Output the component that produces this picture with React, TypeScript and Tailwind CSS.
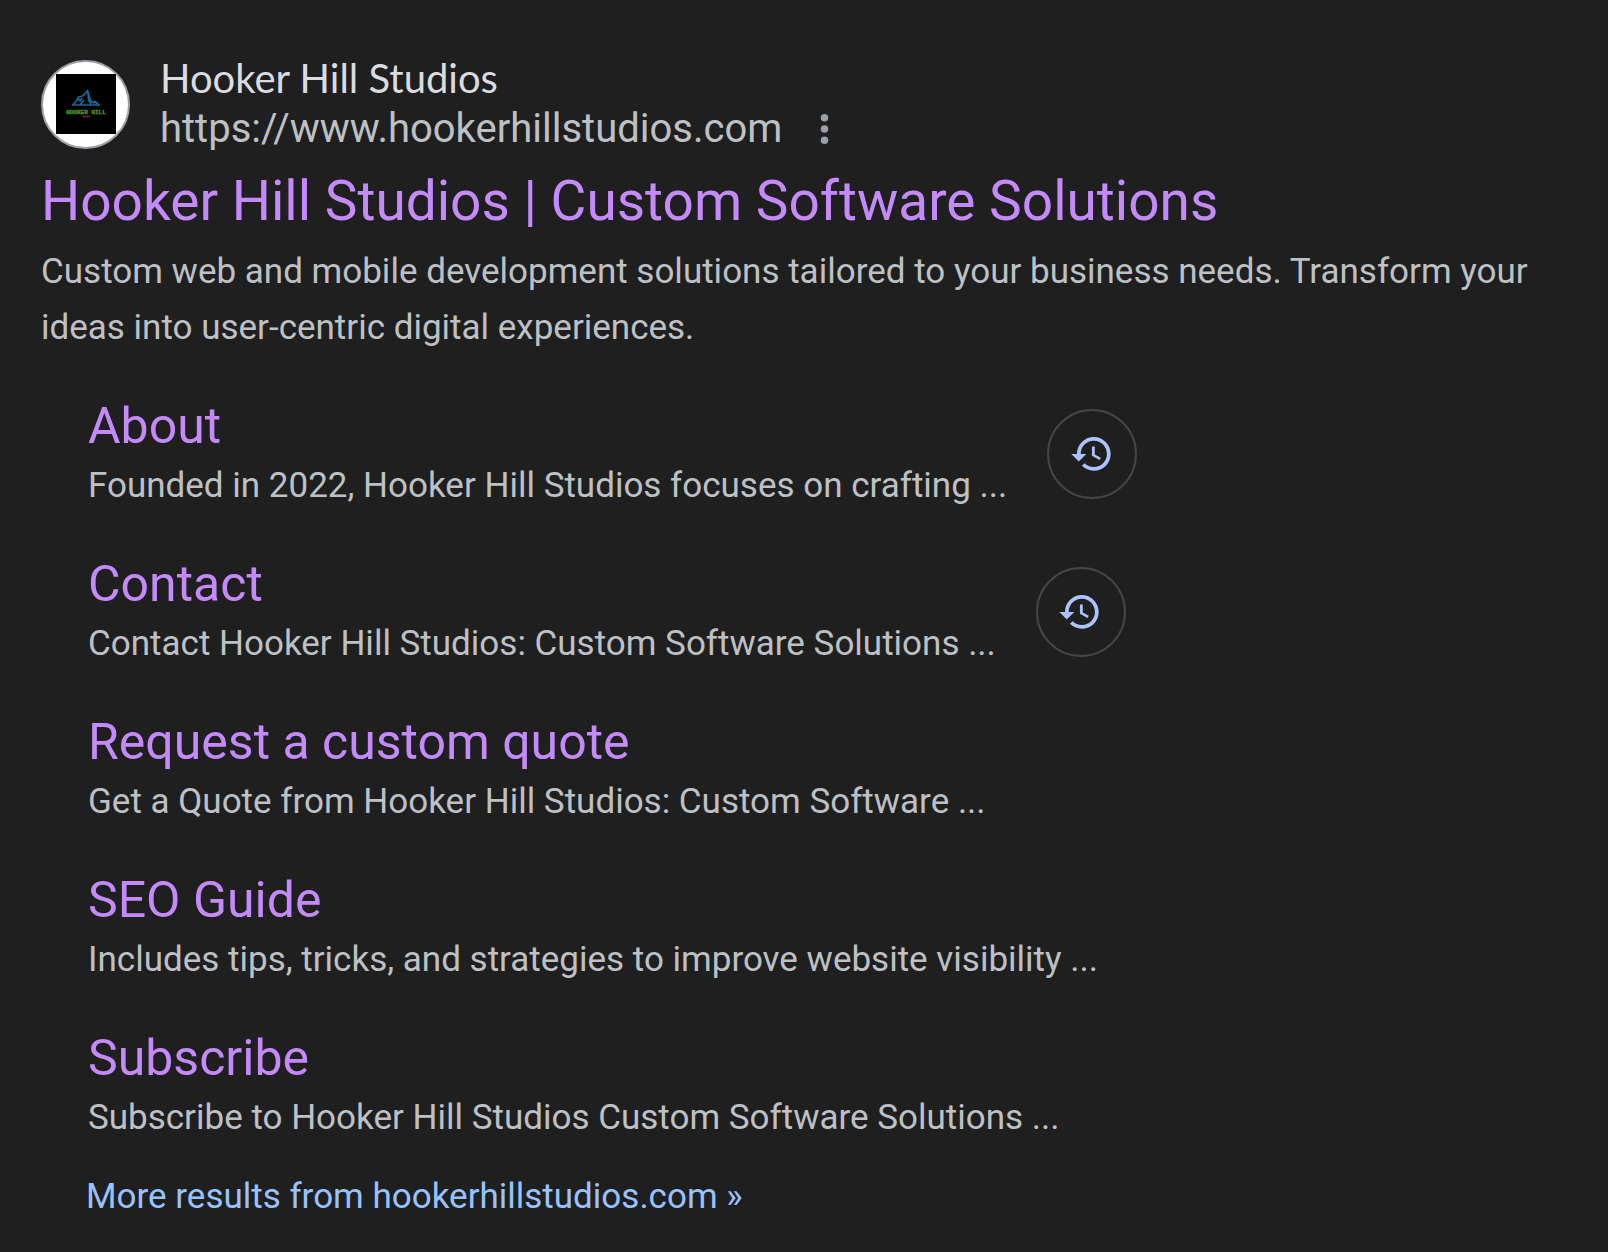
const sitelinks = [
  { title: 'About', text: 'Founded in 2022, Hooker Hill Studios focuses on crafting ...', visited: true },
  { title: 'Contact', text: 'Contact Hooker Hill Studios: Custom Software Solutions ...', visited: true },
  { title: 'Request a custom quote', text: 'Get a Quote from Hooker Hill Studios: Custom Software ...', visited: false },
  { title: 'SEO Guide', text: 'Includes tips, tricks, and strategies to improve website visibility ...', visited: false },
  { title: 'Subscribe', text: 'Subscribe to Hooker Hill Studios Custom Software Solutions ...', visited: false },
]

function Favicon() {
  return (
    <div className="flex size-[89px] shrink-0 items-center justify-center rounded-full border-2 border-[#9aa0a6] bg-white">
      <svg viewBox="0 0 60 60" className="size-[60px]" aria-hidden="true">
        <rect width="60" height="60" fill="#000" />
        {/* Mountains */}
        <g fill="none" stroke="#1a679c" strokeWidth="1.7" strokeLinejoin="round">
          <path d="M16.5 31l4-4 2-4 4-1 2.500-2 2.500-3.500 1.500 5 1.500 5 2 2 2.500-1 4 3.500" />
          <path d="M16 31h28M22 24l2 3 2-3M32 18l.5 8 2.500 4M24 31l4-5M37 29l3-1" />
        </g>
        {/* Wordmark */}
        <text
          x="30"
          y="40"
          textAnchor="middle"
          fill="#4d8c2c"
          stroke="#4d8c2c"
          strokeWidth="0.4"
          className="font-['Liberation_Mono',monospace] text-[6px] font-bold"
        >
          HOOKER HILL
        </text>
        <path d="M26.500 42.500h7.500" stroke="#8c2424" strokeWidth="2" strokeDasharray="1.500 .5" />
      </svg>
    </div>
  )
}

function HistoryIcon() {
  return (
    <svg viewBox="0 0 24 24" fill="currentColor" className="size-[45px]" aria-hidden="true">
      <path d="M12.700 2.700c-4.970 0-9 4.030-9 9H.7l3.890 3.890.07.14L8.700 11.700h-3c0-3.870 3.130-7 7-7s7 3.130 7 7-3.130 7-7 7c-1.930 0-3.680-.79-4.940-2.060l-1.420 1.420C7.970 19.690 10.210 20.700 12.700 20.700c4.970 0 9-4.030 9-9s-4.030-9-9-9zm-1 5v5l4 2.200.72-1.210-3.220-1.740V7.700h-1.500z" />
    </svg>
  )
}

export default function App() {
  return (
    <main className="min-h-screen bg-[#1f1f1f] px-[41px] pt-[53px] pb-6 font-[Roboto,sans-serif] text-[#bdc1c6]">
      {/* Site identity */}
      <header className="flex items-center gap-[30px]">
        <Favicon />
        <div>
          <div className="font-[Lato,sans-serif] text-[40px] leading-[50px] text-[#dadce0]">Hooker Hill Studios</div>
          <div className="flex items-center gap-5">
            <cite className="text-[40px] leading-[52px] not-italic">https://www.hookerhillstudios.com</cite>
            <button type="button" aria-label="About this result" className="text-[#9aa0a6]">
              <svg viewBox="0 0 24 24" fill="currentColor" className="size-[45px]" aria-hidden="true">
                <circle cx="12" cy="5.700" r="2" />
                <circle cx="12" cy="11.700" r="2" />
                <circle cx="12" cy="17.700" r="2" />
              </svg>
            </button>
          </div>
        </div>
      </header>

      <h1 className="mt-[10px] mb-[7px] text-[55px] leading-[72px] text-[#c58af9]">
        <a href="#">Hooker Hill Studios | Custom Software Solutions</a>
      </h1>
      <p className="text-[35px] leading-[56px]">
        Custom web and mobile development solutions tailored to your business needs. Transform your ideas into
        user-centric digital experiences.
      </p>

      {/* Sitelinks */}
      <ul className="mt-[38px] flex flex-col gap-[38px] pl-[47px]">
        {sitelinks.map((link) => (
          <li key={link.title} className="flex items-center gap-10">
            <div>
              <h2 className="text-[50px] leading-[64px] text-[#c58af9]">
                <a href="#">{link.title}</a>
              </h2>
              <p className="text-[35px] leading-[56px]">{link.text}</p>
            </div>
            {link.visited && (
              <button
                type="button"
                aria-label="Visit history"
                className="flex size-[90px] shrink-0 items-center justify-center rounded-full border-2 border-[#444746] text-[#adc3ff]"
              >
                <HistoryIcon />
              </button>
            )}
          </li>
        ))}
      </ul>

      <a href="#" className="mt-[23px] ml-[45px] block text-[35px] leading-[56px] text-[#99c3ff]">
        More results from hookerhillstudios.com »
      </a>
    </main>
  )
}
